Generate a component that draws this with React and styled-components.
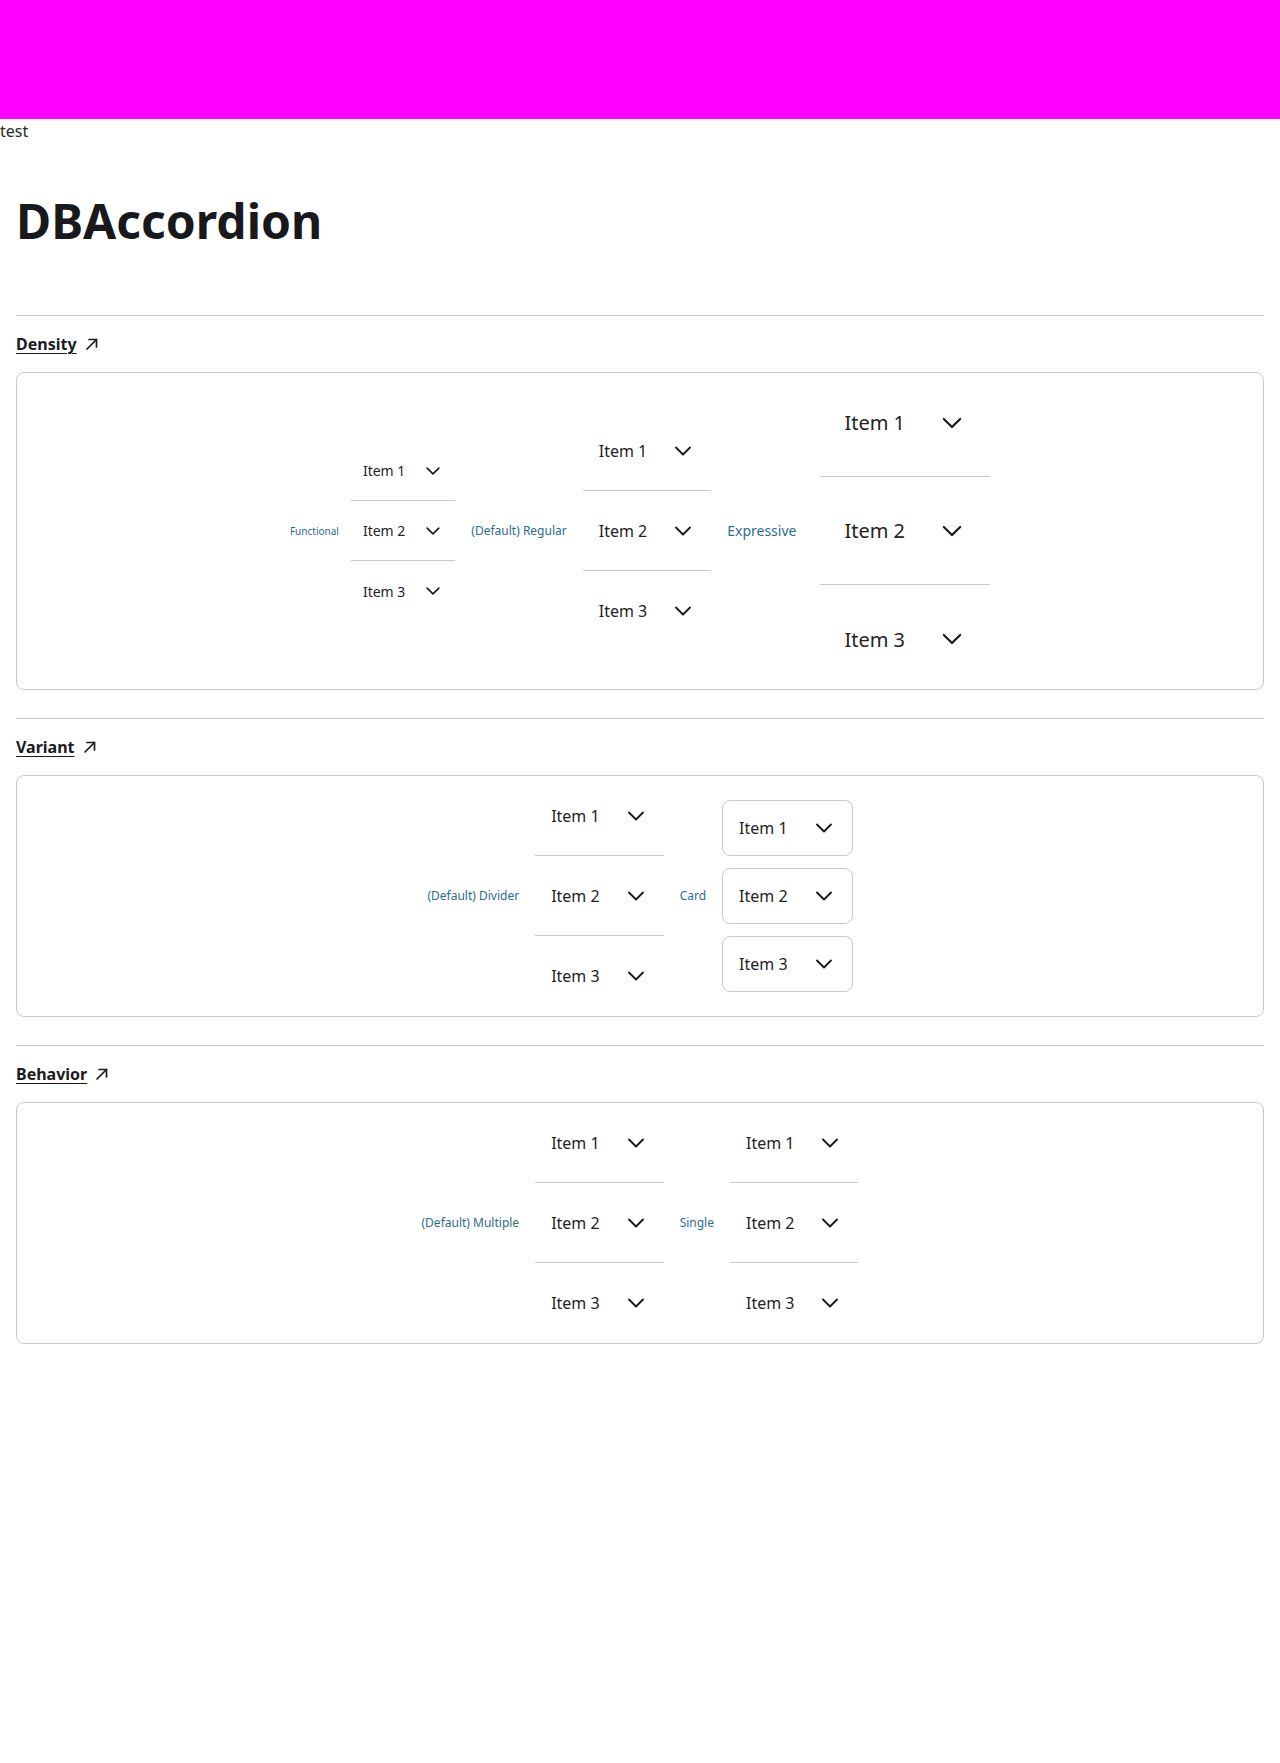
import React from "react";
import styled, { createGlobalStyle } from "styled-components";

const GlobalStyle = createGlobalStyle`
  html, body { margin: 0; padding: 0; background: #ffffff; }
  body {
    font-family: "Noto Sans", "Open Sans", sans-serif;
    color: #232326;
    min-height: 1763px;
  }
  * { box-sizing: border-box; }
`;

const DENSITY = {
  functional: { h: 60, pad: 12, font: 14, gap: 18, icon: 20, label: 10, pairGap: 12 },
  regular: { h: 80, pad: 16, font: 16, gap: 24, icon: 24, label: 12, pairGap: 16 },
  expressive: { h: 108, pad: 24, font: 20, gap: 33, icon: 28, label: 14, pairGap: 24 },
};

const TopBar = styled.div`
  height: 119px;
  background: #ff00ff;
`;

const TestLine = styled.div`
  font-size: 16px;
  line-height: 24px;
  color: #2a2a2a;
`;

const Main = styled.main`
  padding: 0 16px;
`;

const Title = styled.h1`
  margin: 48px 0 64px;
  font-size: 48px;
  line-height: 60px;
  font-weight: 700;
  color: #18191d;
`;

const Section = styled.section`
  margin-top: ${(p) => (p.$first ? 0 : 28)}px;
`;

const Rule = styled.hr`
  margin: 0;
  border: 0;
  border-top: 1px solid #c8cacf;
  height: 0;
`;

const HeadingLink = styled.a`
  display: inline-flex;
  align-items: center;
  margin: 16px 0;
  font-size: 16px;
  line-height: 24px;
  font-weight: 700;
  color: #1b1b1e;
  text-decoration: none;
  cursor: pointer;
`;

const LinkText = styled.span`
  text-decoration: underline;
  text-underline-offset: 3px;
  text-decoration-thickness: 1px;
`;

const LinkIcon = styled.svg`
  width: 16px;
  height: 16px;
  margin-left: 7px;
  flex: none;
`;

const ExampleBox = styled.div`
  height: ${(p) => p.$height}px;
  border: 1px solid #c8cacf;
  border-radius: 8px;
  display: flex;
  align-items: center;
  justify-content: center;
  gap: 16px;
`;

const Pair = styled.div`
  display: flex;
  align-items: center;
  gap: ${(p) => DENSITY[p.$density].pairGap}px;
`;

const Label = styled.span`
  font-size: ${(p) => DENSITY[p.$density].label}px;
  line-height: 1.4;
  color: #2b6d8e;
  white-space: nowrap;
`;

const Accordion = styled.div`
  display: flex;
  flex-direction: column;
  gap: ${(p) => (p.$variant === "card" ? 12 : 0)}px;
`;

const Item = styled.div`
  display: flex;
  align-items: center;
  gap: ${(p) => DENSITY[p.$density].gap}px;
  height: ${(p) => (p.$variant === "card" ? 56 : DENSITY[p.$density].h)}px;
  padding: 0 ${(p) => DENSITY[p.$density].pad}px;
  font-size: ${(p) => DENSITY[p.$density].font}px;
  color: #232326;
  white-space: nowrap;
  ${(p) =>
    p.$variant === "card"
      ? `border: 1px solid #c8cacf; border-radius: 8px;`
      : `&:not(:last-child) { border-bottom: 1px solid #c8cacf; }`}
`;

const Chevron = styled.svg`
  width: ${(p) => DENSITY[p.$density].icon}px;
  height: ${(p) => DENSITY[p.$density].icon}px;
  flex: none;
`;

const ArrowUpRight = () => (
  <LinkIcon viewBox="0 0 16 16" fill="none" stroke="#1b1b1e" strokeWidth="1.7" strokeLinecap="round" strokeLinejoin="round">
    <path d="M3 13 L12.5 3.5" />
    <path d="M5 3.5 H12.5 V11" />
  </LinkIcon>
);

const ExampleAccordion = ({ density = "regular", variant = "divider" }) => (
  <Accordion $variant={variant}>
    {["Item 1", "Item 2", "Item 3"].map((t) => (
      <Item key={t} $density={density} $variant={variant}>
        <span>{t}</span>
        <Chevron $density={density} viewBox="0 0 24 24" fill="none" stroke="#1a1a1d" strokeWidth="1.9" strokeLinecap="round" strokeLinejoin="round">
          <path d="M5 8.5 L12 15.5 L19 8.5" />
        </Chevron>
      </Item>
    ))}
  </Accordion>
);

const sections = [
  {
    title: "Density",
    height: 318,
    examples: [
      { label: "Functional", density: "functional" },
      { label: "(Default) Regular", density: "regular" },
      { label: "Expressive", density: "expressive" },
    ],
  },
  {
    title: "Variant",
    height: 242,
    examples: [
      { label: "(Default) Divider", density: "regular", variant: "divider" },
      { label: "Card", density: "regular", variant: "card" },
    ],
  },
  {
    title: "Behavior",
    height: 242,
    examples: [
      { label: "(Default) Multiple", density: "regular" },
      { label: "Single", density: "regular" },
    ],
  },
];

export default function App() {
  return (
    <>
      <GlobalStyle />
      <TopBar />
      <TestLine>test</TestLine>
      <Main>
        <Title>DBAccordion</Title>
        {sections.map((s, i) => (
          <Section key={s.title} $first={i === 0}>
            <Rule />
            <HeadingLink>
              <LinkText>{s.title}</LinkText>
              <ArrowUpRight />
            </HeadingLink>
            <ExampleBox $height={s.height}>
              {s.examples.map((e) => (
                <Pair key={e.label} $density={e.density}>
                  <Label $density={e.density}>{e.label}</Label>
                  <ExampleAccordion density={e.density} variant={e.variant} />
                </Pair>
              ))}
            </ExampleBox>
          </Section>
        ))}
      </Main>
    </>
  );
}
